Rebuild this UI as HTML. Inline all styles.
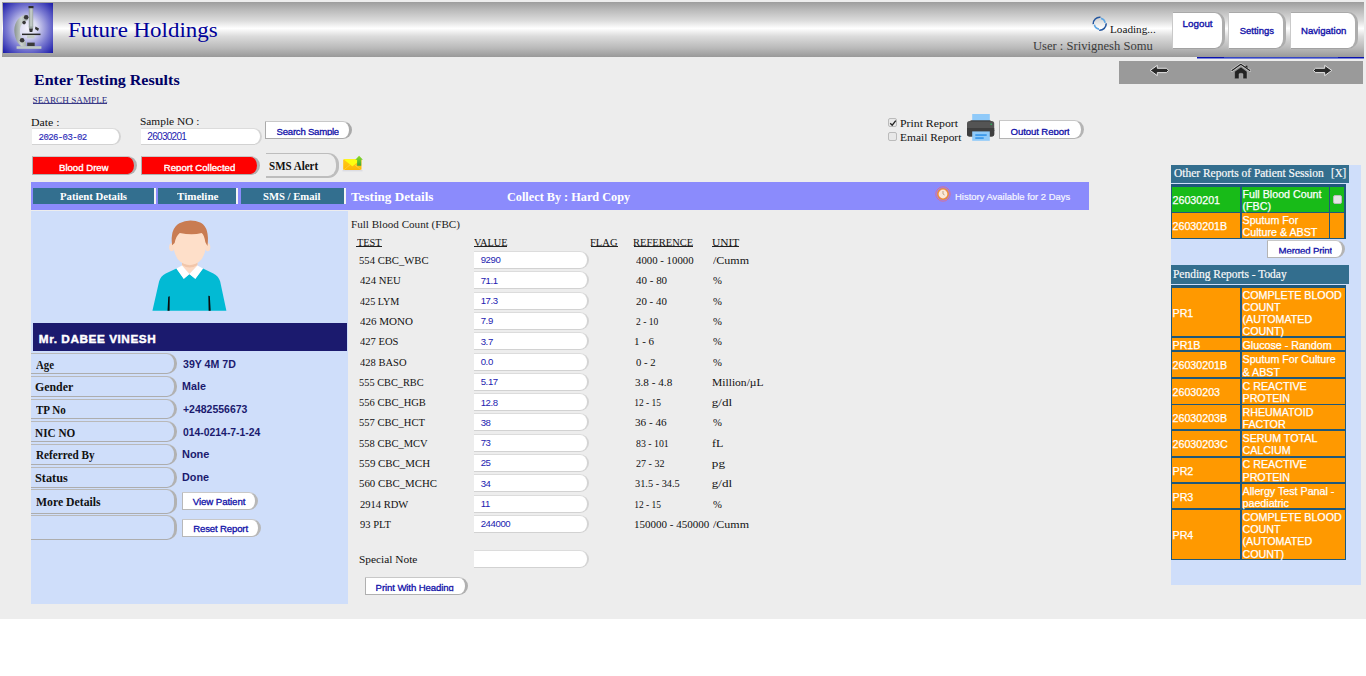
<!DOCTYPE html>
<html><head><meta charset="utf-8"><title>Enter Testing Results</title>
<style>
html,body{margin:0;padding:0;background:#fff;width:1366px;height:676px;overflow:hidden}
body>div,body>svg{position:absolute}
.t{white-space:nowrap}
</style></head><body>
<div style="left:0px;top:0px;width:1366px;height:619px;background:#ededed"></div>
<div style="left:2px;top:2px;width:1362px;height:55px;background:linear-gradient(to bottom,#9d9d9d 0%,#b9b9b9 14%,#dcdcdc 34%,#ffffff 48%,#dcdcdc 62%,#b9b9b9 84%,#999999 100%)"></div>
<svg style="position:absolute;left:3px;top:3px" width="50" height="50" viewBox="0 0 50 50">
<defs><radialGradient id="lg" cx="0.5" cy="0.5" r="0.7"><stop offset="0" stop-color="#f4f4fc"/><stop offset="0.25" stop-color="#dcdcf2"/><stop offset="0.6" stop-color="#7c7cd2"/><stop offset="1" stop-color="#1a1aa8"/></radialGradient>
<linearGradient id="mg" x1="0" y1="0" x2="1" y2="0"><stop offset="0" stop-color="#88938f"/><stop offset="0.5" stop-color="#ccd3d0"/><stop offset="1" stop-color="#98a29e"/></linearGradient></defs>
<rect width="50" height="50" fill="url(#lg)"/>
<path d="M22.5 11.5 C14 14 10.5 22 11.5 30 C12.3 37 15.5 41.5 19 43.5 L23 43.5 L23 39 C18.5 36.5 16.5 32 17 27 C17.5 22 20 18.5 25 17 Z" fill="url(#mg)"/>
<rect x="25.8" y="4" width="4.4" height="20" fill="url(#mg)"/>
<rect x="25.5" y="3" width="5" height="2.2" fill="#2e2e2e"/>
<rect x="25.8" y="23.5" width="4.4" height="2" fill="#9aa5a1"/>
<path d="M26 25.5 L30 25.5 L29.3 29 L26.7 29 Z" fill="#333"/>
<path d="M32.5 23.5 L36 25.5 L35 28 L32 26 Z" fill="#333"/>
<circle cx="23.2" cy="14.2" r="2.3" fill="#383838"/>
<circle cx="21.1" cy="19.6" r="1.8" fill="#383838"/>
<circle cx="19.1" cy="37.2" r="2.3" fill="#383838"/>
<rect x="19" y="30.6" width="18.5" height="1.5" fill="#2a2a2a"/>
<rect x="24" y="32" width="7.5" height="3.3" fill="#c4ccc8"/>
<rect x="24.2" y="39.6" width="7.5" height="3.7" fill="#3a3a3a"/>
<rect x="13.6" y="43.2" width="24.8" height="2.6" fill="#c0cac6"/>
</svg>
<div class="t" style="left:67.50px;top:17.80px;font-family:'Liberation Serif', serif;font-size:21.8px;line-height:24px;font-weight:normal;color:#000099;transform:scaleX(1.0518);transform-origin:1px 0;">Future Holdings</div>
<svg style="position:absolute;left:1091px;top:15px" width="18" height="18" viewBox="0 0 18 18">
<g fill="none" stroke-width="1.6" stroke-linecap="butt">
<path d="M2.2 9.1 A6.5 6.5 0 0 1 9.5 2.3" stroke="#24569e"/>
<path d="M15.2 8.4 A6.5 6.5 0 0 1 8.2 15.2" stroke="#24569e"/>
<path d="M9.9 3.4 A5.4 5.4 0 0 1 14.1 7.9" stroke="#5ea6e4"/>
<path d="M8 14.1 A5.4 5.4 0 0 1 3.4 9.7" stroke="#5ea6e4"/>
</g></svg>
<div class="t" style="left:1110.00px;top:22.70px;font-family:'Liberation Serif', serif;font-size:11.2px;line-height:12px;font-weight:normal;color:#111;transform:scaleX(1.0000);transform-origin:1px 0;">Loading...</div>
<div class="t" style="left:1032.80px;top:38.80px;font-family:'Liberation Serif', serif;font-size:12.3px;line-height:14px;font-weight:normal;color:#3b3b3b;transform:scaleX(1.0224);transform-origin:1px 0;">User : Srivignesh Somu</div>
<div style="left:1172px;top:12px;width:53px;height:36.5px;background:#fff;border-left:1px solid #c9c9c9;border-top:1px solid #a9a9a9;border-bottom:1px solid #a2a2a2;border-right:3px solid #adadad;border-radius:0 10px 10px 0;box-sizing:border-box"></div>
<div class="t" style="left:1182.60px;top:17.70px;font-family:'Liberation Sans', sans-serif;font-size:9.8px;line-height:11px;font-weight:normal;color:#1010a8;letter-spacing:0px;-webkit-text-stroke:0.35px #1010a8">Logout</div>
<div style="left:1228px;top:12px;width:58px;height:36.5px;background:#fff;border-left:1px solid #c9c9c9;border-top:1px solid #a9a9a9;border-bottom:1px solid #a2a2a2;border-right:3px solid #adadad;border-radius:0 10px 10px 0;box-sizing:border-box"></div>
<div class="t" style="left:1239.70px;top:24.70px;font-family:'Liberation Sans', sans-serif;font-size:9.5px;line-height:11px;font-weight:normal;color:#1010a8;letter-spacing:0px;-webkit-text-stroke:0.35px #1010a8">Settings</div>
<div style="left:1290px;top:12px;width:68px;height:36.5px;background:#fff;border-left:1px solid #c9c9c9;border-top:1px solid #a9a9a9;border-bottom:1px solid #a2a2a2;border-right:3px solid #adadad;border-radius:0 10px 10px 0;box-sizing:border-box"></div>
<div class="t" style="left:1301.00px;top:24.70px;font-family:'Liberation Sans', sans-serif;font-size:9.6px;line-height:11px;font-weight:normal;color:#1010a8;letter-spacing:0px;-webkit-text-stroke:0.35px #1010a8">Navigation</div>
<div style="left:1197px;top:57px;width:167px;height:2px;background:linear-gradient(to bottom,#3546c4 0,#3546c4 1px,#7d86d8 1px,#7d86d8 2px)"></div>
<div style="left:1197px;top:57px;width:27px;height:1.4px;background:#0a12ae"></div>
<div style="left:1338px;top:57px;width:26px;height:1.4px;background:#0a12ae"></div>
<div style="left:1119px;top:61px;width:244px;height:23px;background:#9a9a9a"></div>
<svg style="position:absolute;left:1149px;top:64px" width="21" height="13" viewBox="0 0 21 13">
<path d="M1.2 6.4 L8.3 1.4 L8.3 4.3 L17.5 4.3 L19.6 6.4 L17.5 8.6 L8.3 8.6 L8.3 11.6 Z" fill="#2a2a2a" stroke="#f2f2f2" stroke-width="0.9" stroke-linejoin="round"/></svg>
<svg style="position:absolute;left:1231px;top:63px" width="20" height="17" viewBox="0 0 20 17">
<path d="M1 7.5 L9.8 1.3 L18.8 7.5" fill="none" stroke="#dedede" stroke-width="2.4" stroke-linecap="round" stroke-linejoin="round"/>
<path d="M1 7.5 L9.8 1.3 L18.8 7.5" fill="none" stroke="#222" stroke-width="1.3" stroke-linecap="round" stroke-linejoin="round"/>
<path d="M14 3.3 L16.2 2.6 L16.6 5.2 Z" fill="#222"/>
<path d="M3.6 8.6 L10 4.1 L16 8.6 L16 15.2 Q16 15.7 15.5 15.7 L12 15.7 L12 10.8 Q10 9.6 8 10.8 L8 15.7 L4.1 15.7 Q3.6 15.7 3.6 15.2 Z" fill="#222" stroke="#bdbdbd" stroke-width="0.4"/></svg>
<svg style="position:absolute;left:1312px;top:64px" width="21" height="13" viewBox="0 0 21 13">
<path d="M19.8 6.4 L12.7 1.4 L12.7 4.3 L3.5 4.3 L1.4 6.4 L3.5 8.6 L12.7 8.6 L12.7 11.6 Z" fill="#2a2a2a" stroke="#f2f2f2" stroke-width="0.9" stroke-linejoin="round"/></svg>
<div class="t" style="left:33.50px;top:70.90px;font-family:'Liberation Serif', serif;font-size:15.2px;line-height:17px;font-weight:bold;color:#000066;transform:scaleX(1.0543);transform-origin:0px 0;">Enter Testing Results</div>
<div class="t" style="left:32.60px;top:94.60px;font-family:'Liberation Serif', serif;font-size:9.2px;line-height:10px;font-weight:normal;color:#2b2b80;transform:scaleX(1.0000);transform-origin:1px 0;">SEARCH SAMPLE</div>
<div style="left:33.3px;top:103.2px;width:73.4px;height:1px;background:#3a3a88"></div>
<div class="t" style="left:31.20px;top:115.80px;font-family:'Liberation Serif', serif;font-size:11.2px;line-height:12px;font-weight:normal;color:#111;transform:scaleX(1.0560);transform-origin:1px 0;">Date :</div>
<div class="t" style="left:140.00px;top:114.80px;font-family:'Liberation Serif', serif;font-size:11.2px;line-height:12px;font-weight:normal;color:#111;transform:scaleX(1.0175);transform-origin:1px 0;">Sample NO :</div>
<div style="left:32px;top:128px;width:89px;height:16.5px;background:#fff;border-top:1px solid #dcdcdc;border-bottom:1px solid #d2d2d2;border-right:2px solid #d4d4d4;border-radius:0 9px 9px 0;box-sizing:border-box"></div>
<div class="t" style="left:38.60px;top:133.20px;font-family:'Liberation Mono', monospace;font-size:9px;line-height:10px;font-weight:normal;color:#2a2ab8;letter-spacing:-0.6px;-webkit-text-stroke:0.15px #2a2ab8">2026-03-02</div>
<div style="left:141px;top:128px;width:121px;height:16.5px;background:#fff;border-top:1px solid #dcdcdc;border-bottom:1px solid #d2d2d2;border-right:2px solid #d4d4d4;border-radius:0 9px 9px 0;box-sizing:border-box"></div>
<div class="t" style="left:147.30px;top:131.00px;font-family:'Liberation Sans', sans-serif;font-size:10px;line-height:11px;font-weight:normal;color:#1c1cb0;letter-spacing:-0.7px">26030201</div>
<div style="left:265px;top:121px;width:87px;height:18px;background:#fff;border-left:1px solid #aaa;border-top:1px solid #c8c8c8;border-bottom:1px solid #aaa;border-right:3px solid #aaa;border-radius:0 11px 11px 0;box-sizing:border-box"></div>
<div class="t" style="left:276.60px;top:125.70px;font-family:'Liberation Sans', sans-serif;font-size:9.6px;line-height:11px;font-weight:normal;color:#1010a8;letter-spacing:-0.25px;-webkit-text-stroke:0.3px #1010a8;clip-path:inset(0 0 1.30px 0)">Search Sample</div>
<div style="left:32px;top:156px;width:105px;height:19px;background:#ff0000;border-left:1px solid #b0b0b0;border-top:1px solid #c8c8c8;border-bottom:1px solid #b0b0b0;border-right:3px solid #b0b0b0;border-radius:0 11px 11px 0;box-sizing:border-box"></div>
<div class="t" style="left:59.00px;top:161.80px;font-family:'Liberation Sans', sans-serif;font-size:9.6px;line-height:11px;font-weight:normal;color:#fff;letter-spacing:0px;-webkit-text-stroke:0.35px #fff;clip-path:inset(0 0 1.20px 0)">Blood Drew</div>
<div style="left:141px;top:156px;width:119px;height:19px;background:#ff0000;border-left:1px solid #b0b0b0;border-top:1px solid #c8c8c8;border-bottom:1px solid #b0b0b0;border-right:3px solid #b0b0b0;border-radius:0 11px 11px 0;box-sizing:border-box"></div>
<div class="t" style="left:163.80px;top:161.80px;font-family:'Liberation Sans', sans-serif;font-size:9.6px;line-height:11px;font-weight:normal;color:#fff;letter-spacing:0px;-webkit-text-stroke:0.35px #fff;clip-path:inset(0 0 1.20px 0)">Report Collected</div>
<div style="left:266px;top:153px;width:73px;height:25px;border-top:1px solid #bdbdbd;border-bottom:2px solid #bdbdbd;border-right:3px solid #bdbdbd;border-radius:0 11px 11px 0;box-sizing:border-box"></div>
<div class="t" style="left:268.70px;top:160.00px;font-family:'Liberation Serif', serif;font-size:11.6px;line-height:13px;font-weight:bold;color:#111;transform:scaleX(0.9471);transform-origin:1px 0;">SMS Alert</div>
<svg style="position:absolute;left:342px;top:155px" width="21" height="17" viewBox="0 0 21 17">
<defs><linearGradient id="eg" x1="0" y1="0" x2="0" y2="1"><stop offset="0" stop-color="#ffcc1a"/><stop offset="1" stop-color="#ffb805"/></linearGradient>
<linearGradient id="ag" x1="0" y1="0" x2="0" y2="1"><stop offset="0" stop-color="#8ede22"/><stop offset="1" stop-color="#43a53a"/></linearGradient></defs>
<rect x="1.2" y="4.3" width="18.3" height="10.8" rx="1" fill="url(#eg)"/>
<path d="M1.5 4.3 L10 11 Q10.4 11.4 10.8 11 L19.3 4.3 Z" fill="#ffff10"/>
<path d="M2.2 14.6 L8.2 9.6 M18.6 14.6 L12.6 9.6" stroke="#ffe88a" stroke-width="0.6" stroke-dasharray="1 0.6"/>
<path d="M17.1 0.8 L20.9 4.8 L19.2 4.8 L19.2 10.8 L15.1 10.8 L15.1 4.8 L13.3 4.8 Z" fill="url(#ag)"/>
<rect x="0.5" y="15.3" width="20" height="1" fill="#c9cad8" opacity="0.7"/>
</svg>
<div style="left:31px;top:182px;width:1058px;height:28px;background:#8b8bfc"></div>
<div style="left:33px;top:188px;width:121px;height:16px;background:#336f8f"></div>
<div style="left:154px;top:188px;width:2px;height:16px;background:#f4f4f4"></div>
<div class="t" style="left:60.10px;top:191.00px;font-family:'Liberation Serif', serif;font-size:10.2px;line-height:11px;font-weight:bold;color:#fff;transform:scaleX(1.0531);transform-origin:0px 0;">Patient Details</div>
<div style="left:158px;top:188px;width:78px;height:16px;background:#336f8f"></div>
<div style="left:236px;top:188px;width:2px;height:16px;background:#f4f4f4"></div>
<div class="t" style="left:176.90px;top:191.00px;font-family:'Liberation Serif', serif;font-size:10.2px;line-height:11px;font-weight:bold;color:#fff;transform:scaleX(1.0816);transform-origin:0px 0;">Timeline</div>
<div style="left:241px;top:188px;width:103px;height:16px;background:#336f8f"></div>
<div style="left:344px;top:188px;width:2px;height:16px;background:#f4f4f4"></div>
<div class="t" style="left:263.00px;top:191.00px;font-family:'Liberation Serif', serif;font-size:10.2px;line-height:11px;font-weight:bold;color:#fff;transform:scaleX(1.0481);transform-origin:1px 0;">SMS / Email</div>
<div class="t" style="left:351.30px;top:190.20px;font-family:'Liberation Serif', serif;font-size:12.4px;line-height:14px;font-weight:bold;color:#fff;transform:scaleX(1.0610);transform-origin:0px 0;">Testing Details</div>
<div class="t" style="left:506.50px;top:190.20px;font-family:'Liberation Serif', serif;font-size:12.4px;line-height:14px;font-weight:bold;color:#fff;transform:scaleX(0.9879);transform-origin:1px 0;">Collect By : Hard Copy</div>
<svg style="position:absolute;left:935px;top:186px" width="16" height="16" viewBox="0 0 16 16">
<circle cx="8" cy="8" r="7.2" fill="none" stroke="#e06c8c" stroke-width="0.9"/>
<circle cx="8" cy="8" r="6" fill="#ee8a3a"/>
<circle cx="8" cy="8" r="4.4" fill="#fbe8d8"/>
<path d="M8 5 L8 8 L9.6 9" stroke="#a86" stroke-width="0.7" fill="none"/>
</svg>
<div class="t" style="left:954.80px;top:191.10px;font-family:'Liberation Sans', sans-serif;font-size:9.8px;line-height:11px;font-weight:normal;color:#f6f6ff;transform:scaleX(0.9627);transform-origin:1px 0;-webkit-text-stroke:0.2px #f6f6ff">History Available for 2 Days</div>
<div style="left:31px;top:211px;width:317px;height:393px;background:#cfdefa"></div>
<svg style="position:absolute;left:145px;top:215px" width="90" height="100" viewBox="0 0 608 676">
<path d="M50 648 L95 450 Q105 412 140 395 L212 362 L262 430 L300 400 L340 430 L392 362 L462 395 Q497 412 508 450 L550 648 Z" fill="#02bad4"/>
<path d="M157 552 L167 550 L166 648 L152 648 Z M428 546 L438 548 L444 648 L430 648 Z" fill="#0a0a0a"/>
<path d="M250 285 L354 285 L354 345 L300 398 L250 345 Z" fill="#fcd9c3"/>
<path d="M250 318 Q302 360 354 318 L354 338 Q302 372 250 338 Z" fill="#f1c6aa"/>
<path d="M212 362 L250 342 L300 398 L262 432 Z M354 342 L392 362 L340 432 L300 398 Z" fill="#fff"/>
<ellipse cx="180" cy="218" rx="17" ry="27" fill="#fdddc7"/>
<ellipse cx="424" cy="218" rx="17" ry="27" fill="#fdddc7"/>
<path d="M188 150 Q186 336 302 338 Q418 336 416 150 Q412 110 302 108 Q192 110 188 150 Z" fill="#fedfc9"/>
<path d="M183 205 Q168 92 232 55 Q302 22 378 52 Q438 88 422 210 L408 185 Q400 135 383 122 Q320 138 235 122 Q210 140 200 190 Z" fill="#c97c52"/>
</svg>
<div style="left:33px;top:323px;width:314px;height:28px;background:#1b1a6e"></div>
<div class="t" style="left:38.90px;top:333.70px;font-family:'Liberation Sans', sans-serif;font-size:10.4px;line-height:11px;font-weight:bold;color:#fff;transform:scaleX(1.1304);transform-origin:1px 0;letter-spacing:0.5px;-webkit-text-stroke:0.4px #fff">Mr. DABEE VINESH</div>
<div style="left:31px;top:353px;width:146px;height:21.399999999999977px;border-top:1px solid #b9b9b9;border-bottom:1px solid #adadad;border-right:3px solid #b2b2b2;border-radius:0 10px 10px 0;box-sizing:border-box"></div>
<div class="t" style="left:36.20px;top:357.60px;font-family:'Liberation Serif', serif;font-size:11.8px;line-height:14px;font-weight:bold;color:#111;transform:scaleX(0.9150);transform-origin:0px 0;">Age</div>
<div class="t" style="left:183.00px;top:357.80px;font-family:'Liberation Sans', sans-serif;font-size:10.8px;line-height:12px;font-weight:bold;color:#1b1a6e;transform:scaleX(0.9815);transform-origin:0px 0;">39Y 4M 7D</div>
<div style="left:31px;top:376px;width:146px;height:20.69999999999999px;border-top:1px solid #b9b9b9;border-bottom:1px solid #adadad;border-right:3px solid #b2b2b2;border-radius:0 10px 10px 0;box-sizing:border-box"></div>
<div class="t" style="left:35.20px;top:380.25px;font-family:'Liberation Serif', serif;font-size:11.8px;line-height:14px;font-weight:bold;color:#111;transform:scaleX(1.0054);transform-origin:1px 0;">Gender</div>
<div class="t" style="left:182.00px;top:380.45px;font-family:'Liberation Sans', sans-serif;font-size:10.8px;line-height:12px;font-weight:bold;color:#1b1a6e;transform:scaleX(0.9957);transform-origin:1px 0;">Male</div>
<div style="left:31px;top:398.5px;width:146px;height:20.69999999999999px;border-top:1px solid #b9b9b9;border-bottom:1px solid #adadad;border-right:3px solid #b2b2b2;border-radius:0 10px 10px 0;box-sizing:border-box"></div>
<div class="t" style="left:36.20px;top:402.75px;font-family:'Liberation Serif', serif;font-size:11.8px;line-height:14px;font-weight:bold;color:#111;transform:scaleX(0.9344);transform-origin:0px 0;">TP No</div>
<div class="t" style="left:183.00px;top:402.95px;font-family:'Liberation Sans', sans-serif;font-size:10.8px;line-height:12px;font-weight:bold;color:#1b1a6e;transform:scaleX(0.9712);transform-origin:0px 0;">+2482556673</div>
<div style="left:31px;top:421.2px;width:146px;height:21.100000000000023px;border-top:1px solid #b9b9b9;border-bottom:1px solid #adadad;border-right:3px solid #b2b2b2;border-radius:0 10px 10px 0;box-sizing:border-box"></div>
<div class="t" style="left:35.20px;top:425.65px;font-family:'Liberation Serif', serif;font-size:11.8px;line-height:14px;font-weight:bold;color:#111;transform:scaleX(0.9512);transform-origin:1px 0;">NIC NO</div>
<div class="t" style="left:183.00px;top:425.85px;font-family:'Liberation Sans', sans-serif;font-size:10.8px;line-height:12px;font-weight:bold;color:#1b1a6e;transform:scaleX(0.9617);transform-origin:0px 0;">014-0214-7-1-24</div>
<div style="left:31px;top:443.8px;width:146px;height:20.80000000000001px;border-top:1px solid #b9b9b9;border-bottom:1px solid #adadad;border-right:3px solid #b2b2b2;border-radius:0 10px 10px 0;box-sizing:border-box"></div>
<div class="t" style="left:36.20px;top:448.10px;font-family:'Liberation Serif', serif;font-size:11.8px;line-height:14px;font-weight:bold;color:#111;transform:scaleX(0.9484);transform-origin:0px 0;">Referred By</div>
<div class="t" style="left:182.00px;top:448.30px;font-family:'Liberation Sans', sans-serif;font-size:10.8px;line-height:12px;font-weight:bold;color:#1b1a6e;transform:scaleX(1.0154);transform-origin:1px 0;">None</div>
<div style="left:31px;top:466.5px;width:146px;height:21.19999999999999px;border-top:1px solid #b9b9b9;border-bottom:1px solid #adadad;border-right:3px solid #b2b2b2;border-radius:0 10px 10px 0;box-sizing:border-box"></div>
<div class="t" style="left:35.20px;top:471.00px;font-family:'Liberation Serif', serif;font-size:11.8px;line-height:14px;font-weight:bold;color:#111;transform:scaleX(1.0433);transform-origin:1px 0;">Status</div>
<div class="t" style="left:182.00px;top:471.20px;font-family:'Liberation Sans', sans-serif;font-size:10.8px;line-height:12px;font-weight:bold;color:#1b1a6e;transform:scaleX(1.0000);transform-origin:1px 0;">Done</div>
<div style="left:31px;top:489px;width:146px;height:24.5px;border-top:1px solid #b9b9b9;border-bottom:1px solid #adadad;border-right:3px solid #b2b2b2;border-radius:0 10px 10px 0;box-sizing:border-box"></div>
<div class="t" style="left:36.20px;top:495.15px;font-family:'Liberation Serif', serif;font-size:11.8px;line-height:14px;font-weight:bold;color:#111;transform:scaleX(0.9938);transform-origin:0px 0;">More Details</div>
<div style="left:31px;top:515px;width:146px;height:25.399999999999977px;border-top:1px solid #b9b9b9;border-bottom:1px solid #adadad;border-right:3px solid #b2b2b2;border-radius:0 10px 10px 0;box-sizing:border-box"></div>
<div style="left:182px;top:492px;width:76px;height:18px;background:#fff;border-left:1px solid #b8b8b8;border-top:1px solid #c8c8c8;border-bottom:1px solid #b8b8b8;border-right:3px solid #b8b8b8;border-radius:0 11px 11px 0;box-sizing:border-box"></div>
<div class="t" style="left:192.80px;top:496.00px;font-family:'Liberation Sans', sans-serif;font-size:9.7px;line-height:11px;font-weight:normal;color:#1010a8;letter-spacing:-0.1px;-webkit-text-stroke:0.3px #1010a8;">View Patient</div>
<div style="left:182px;top:519px;width:79px;height:18px;background:#fff;border-left:1px solid #b8b8b8;border-top:1px solid #c8c8c8;border-bottom:1px solid #b8b8b8;border-right:3px solid #b8b8b8;border-radius:0 11px 11px 0;box-sizing:border-box"></div>
<div class="t" style="left:193.20px;top:522.90px;font-family:'Liberation Sans', sans-serif;font-size:9.6px;line-height:11px;font-weight:normal;color:#1010a8;letter-spacing:-0.15px;-webkit-text-stroke:0.3px #1010a8;">Reset Report</div>
<div class="t" style="left:350.80px;top:217.50px;font-family:'Liberation Serif', serif;font-size:11.3px;line-height:12px;font-weight:normal;color:#1a1a1a;transform:scaleX(0.9835);transform-origin:1px 0;">Full Blood Count (FBC)</div>
<div class="t" style="left:356.60px;top:236.90px;font-family:'Liberation Serif', serif;font-size:10.4px;line-height:11px;font-weight:normal;color:#111;transform:scaleX(0.9920);transform-origin:0px 0;">TEST</div>
<div style="left:356.3px;top:246.3px;width:25.400000000000002px;height:1px;background:#222"></div>
<div class="t" style="left:473.80px;top:236.90px;font-family:'Liberation Serif', serif;font-size:10.4px;line-height:11px;font-weight:normal;color:#111;transform:scaleX(0.9909);transform-origin:0px 0;">VALUE</div>
<div style="left:473.5px;top:246.3px;width:33.300000000000004px;height:1px;background:#222"></div>
<div class="t" style="left:590.40px;top:236.90px;font-family:'Liberation Serif', serif;font-size:10.4px;line-height:11px;font-weight:normal;color:#111;transform:scaleX(1.0154);transform-origin:1px 0;">FLAG</div>
<div style="left:591.1px;top:246.3px;width:27.0px;height:1px;background:#222"></div>
<div class="t" style="left:632.90px;top:236.90px;font-family:'Liberation Serif', serif;font-size:10.4px;line-height:11px;font-weight:normal;color:#111;transform:scaleX(1.0138);transform-origin:1px 0;">REFERENCE</div>
<div style="left:633.6px;top:246.3px;width:59.4px;height:1px;background:#222"></div>
<div class="t" style="left:711.50px;top:236.90px;font-family:'Liberation Serif', serif;font-size:10.4px;line-height:11px;font-weight:normal;color:#111;transform:scaleX(1.1000);transform-origin:1px 0;">UNIT</div>
<div style="left:712.2px;top:246.3px;width:27.0px;height:1px;background:#222"></div>
<div style="left:474px;top:251.0px;width:115px;height:18px;background:#fff;border-top:1px solid #dcdcdc;border-bottom:1px solid #d2d2d2;border-right:2px solid #d4d4d4;border-radius:0 9px 9px 0;box-sizing:border-box"></div>
<div class="t" style="left:358.80px;top:254.00px;font-family:'Liberation Serif', serif;font-size:11.2px;line-height:12px;font-weight:normal;color:#111;transform:scaleX(0.9507);transform-origin:1px 0;">554 CBC_WBC</div>
<div class="t" style="left:480.70px;top:254.40px;font-family:'Liberation Sans', sans-serif;font-size:9.6px;line-height:11px;font-weight:normal;color:#1c1cb0;letter-spacing:-0.4px">9290</div>
<div class="t" style="left:635.50px;top:255.00px;font-family:'Liberation Serif', serif;font-size:10.6px;line-height:11px;font-weight:normal;color:#111;transform:scaleX(1.0196);transform-origin:0px 0;">4000 - 10000</div>
<div class="t" style="left:712.60px;top:254.00px;font-family:'Liberation Serif', serif;font-size:11.2px;line-height:12px;font-weight:normal;color:#111;transform:scaleX(1.0727);transform-origin:0px 0;">/Cumm</div>
<div style="left:474px;top:271.3px;width:115px;height:18px;background:#fff;border-top:1px solid #dcdcdc;border-bottom:1px solid #d2d2d2;border-right:2px solid #d4d4d4;border-radius:0 9px 9px 0;box-sizing:border-box"></div>
<div class="t" style="left:359.80px;top:274.30px;font-family:'Liberation Serif', serif;font-size:11.2px;line-height:12px;font-weight:normal;color:#111;transform:scaleX(0.9595);transform-origin:0px 0;">424 NEU</div>
<div class="t" style="left:480.70px;top:274.70px;font-family:'Liberation Sans', sans-serif;font-size:9.6px;line-height:11px;font-weight:normal;color:#1c1cb0;letter-spacing:-0.4px">71.1</div>
<div class="t" style="left:635.50px;top:275.30px;font-family:'Liberation Serif', serif;font-size:10.6px;line-height:11px;font-weight:normal;color:#111;transform:scaleX(1.0367);transform-origin:0px 0;">40 - 80</div>
<div class="t" style="left:712.60px;top:274.30px;font-family:'Liberation Serif', serif;font-size:11.2px;line-height:12px;font-weight:normal;color:#111;transform:scaleX(0.9556);transform-origin:0px 0;">%</div>
<div style="left:474px;top:291.6px;width:115px;height:18px;background:#fff;border-top:1px solid #dcdcdc;border-bottom:1px solid #d2d2d2;border-right:2px solid #d4d4d4;border-radius:0 9px 9px 0;box-sizing:border-box"></div>
<div class="t" style="left:359.80px;top:294.60px;font-family:'Liberation Serif', serif;font-size:11.2px;line-height:12px;font-weight:normal;color:#111;transform:scaleX(0.9070);transform-origin:0px 0;">425 LYM</div>
<div class="t" style="left:480.70px;top:295.00px;font-family:'Liberation Sans', sans-serif;font-size:9.6px;line-height:11px;font-weight:normal;color:#1c1cb0;letter-spacing:-0.4px">17.3</div>
<div class="t" style="left:635.50px;top:295.60px;font-family:'Liberation Serif', serif;font-size:10.6px;line-height:11px;font-weight:normal;color:#111;transform:scaleX(1.0267);transform-origin:0px 0;">20 - 40</div>
<div class="t" style="left:712.60px;top:294.60px;font-family:'Liberation Serif', serif;font-size:11.2px;line-height:12px;font-weight:normal;color:#111;transform:scaleX(0.9556);transform-origin:0px 0;">%</div>
<div style="left:474px;top:311.9px;width:115px;height:18px;background:#fff;border-top:1px solid #dcdcdc;border-bottom:1px solid #d2d2d2;border-right:2px solid #d4d4d4;border-radius:0 9px 9px 0;box-sizing:border-box"></div>
<div class="t" style="left:359.80px;top:314.90px;font-family:'Liberation Serif', serif;font-size:11.2px;line-height:12px;font-weight:normal;color:#111;transform:scaleX(0.9852);transform-origin:0px 0;">426 MONO</div>
<div class="t" style="left:480.70px;top:315.30px;font-family:'Liberation Sans', sans-serif;font-size:9.6px;line-height:11px;font-weight:normal;color:#1c1cb0;letter-spacing:-0.4px">7.9</div>
<div class="t" style="left:635.50px;top:315.90px;font-family:'Liberation Serif', serif;font-size:10.6px;line-height:11px;font-weight:normal;color:#111;transform:scaleX(0.9000);transform-origin:0px 0;">2 - 10</div>
<div class="t" style="left:712.60px;top:314.90px;font-family:'Liberation Serif', serif;font-size:11.2px;line-height:12px;font-weight:normal;color:#111;transform:scaleX(0.9556);transform-origin:0px 0;">%</div>
<div style="left:474px;top:332.2px;width:115px;height:18px;background:#fff;border-top:1px solid #dcdcdc;border-bottom:1px solid #d2d2d2;border-right:2px solid #d4d4d4;border-radius:0 9px 9px 0;box-sizing:border-box"></div>
<div class="t" style="left:359.80px;top:335.20px;font-family:'Liberation Serif', serif;font-size:11.2px;line-height:12px;font-weight:normal;color:#111;transform:scaleX(0.9450);transform-origin:0px 0;">427 EOS</div>
<div class="t" style="left:480.70px;top:335.60px;font-family:'Liberation Sans', sans-serif;font-size:9.6px;line-height:11px;font-weight:normal;color:#1c1cb0;letter-spacing:-0.4px">3.7</div>
<div class="t" style="left:633.50px;top:336.20px;font-family:'Liberation Serif', serif;font-size:10.6px;line-height:11px;font-weight:normal;color:#111;transform:scaleX(1.0412);transform-origin:2px 0;">1 - 6</div>
<div class="t" style="left:712.60px;top:335.20px;font-family:'Liberation Serif', serif;font-size:11.2px;line-height:12px;font-weight:normal;color:#111;transform:scaleX(0.9556);transform-origin:0px 0;">%</div>
<div style="left:474px;top:352.5px;width:115px;height:18px;background:#fff;border-top:1px solid #dcdcdc;border-bottom:1px solid #d2d2d2;border-right:2px solid #d4d4d4;border-radius:0 9px 9px 0;box-sizing:border-box"></div>
<div class="t" style="left:359.80px;top:355.50px;font-family:'Liberation Serif', serif;font-size:11.2px;line-height:12px;font-weight:normal;color:#111;transform:scaleX(0.9408);transform-origin:0px 0;">428 BASO</div>
<div class="t" style="left:480.70px;top:355.90px;font-family:'Liberation Sans', sans-serif;font-size:9.6px;line-height:11px;font-weight:normal;color:#1c1cb0;letter-spacing:-0.4px">0.0</div>
<div class="t" style="left:635.50px;top:356.50px;font-family:'Liberation Serif', serif;font-size:10.6px;line-height:11px;font-weight:normal;color:#111;transform:scaleX(1.0105);transform-origin:0px 0;">0 - 2</div>
<div class="t" style="left:712.60px;top:355.50px;font-family:'Liberation Serif', serif;font-size:11.2px;line-height:12px;font-weight:normal;color:#111;transform:scaleX(0.9556);transform-origin:0px 0;">%</div>
<div style="left:474px;top:372.8px;width:115px;height:18px;background:#fff;border-top:1px solid #dcdcdc;border-bottom:1px solid #d2d2d2;border-right:2px solid #d4d4d4;border-radius:0 9px 9px 0;box-sizing:border-box"></div>
<div class="t" style="left:358.80px;top:375.80px;font-family:'Liberation Serif', serif;font-size:11.2px;line-height:12px;font-weight:normal;color:#111;transform:scaleX(0.9221);transform-origin:1px 0;">555 CBC_RBC</div>
<div class="t" style="left:480.70px;top:376.20px;font-family:'Liberation Sans', sans-serif;font-size:9.6px;line-height:11px;font-weight:normal;color:#1c1cb0;letter-spacing:-0.4px">5.17</div>
<div class="t" style="left:634.50px;top:376.80px;font-family:'Liberation Serif', serif;font-size:10.6px;line-height:11px;font-weight:normal;color:#111;transform:scaleX(1.0559);transform-origin:1px 0;">3.8 - 4.8</div>
<div class="t" style="left:711.60px;top:375.80px;font-family:'Liberation Serif', serif;font-size:11.2px;line-height:12px;font-weight:normal;color:#111;transform:scaleX(1.0333);transform-origin:1px 0;">Million/&micro;L</div>
<div style="left:474px;top:393.1px;width:115px;height:18px;background:#fff;border-top:1px solid #dcdcdc;border-bottom:1px solid #d2d2d2;border-right:2px solid #d4d4d4;border-radius:0 9px 9px 0;box-sizing:border-box"></div>
<div class="t" style="left:358.80px;top:396.10px;font-family:'Liberation Serif', serif;font-size:11.2px;line-height:12px;font-weight:normal;color:#111;transform:scaleX(0.9371);transform-origin:1px 0;">556 CBC_HGB</div>
<div class="t" style="left:480.70px;top:396.50px;font-family:'Liberation Sans', sans-serif;font-size:9.6px;line-height:11px;font-weight:normal;color:#1c1cb0;letter-spacing:-0.4px">12.8</div>
<div class="t" style="left:633.50px;top:397.10px;font-family:'Liberation Serif', serif;font-size:10.6px;line-height:11px;font-weight:normal;color:#111;transform:scaleX(0.8929);transform-origin:2px 0;">12 - 15</div>
<div class="t" style="left:711.60px;top:396.10px;font-family:'Liberation Serif', serif;font-size:11.2px;line-height:12px;font-weight:normal;color:#111;transform:scaleX(1.1687);transform-origin:1px 0;">g/dl</div>
<div style="left:474px;top:413.4px;width:115px;height:18px;background:#fff;border-top:1px solid #dcdcdc;border-bottom:1px solid #d2d2d2;border-right:2px solid #d4d4d4;border-radius:0 9px 9px 0;box-sizing:border-box"></div>
<div class="t" style="left:358.80px;top:416.40px;font-family:'Liberation Serif', serif;font-size:11.2px;line-height:12px;font-weight:normal;color:#111;transform:scaleX(0.9406);transform-origin:1px 0;">557 CBC_HCT</div>
<div class="t" style="left:480.70px;top:416.80px;font-family:'Liberation Sans', sans-serif;font-size:9.6px;line-height:11px;font-weight:normal;color:#1c1cb0;letter-spacing:-0.4px">38</div>
<div class="t" style="left:634.50px;top:417.40px;font-family:'Liberation Serif', serif;font-size:10.6px;line-height:11px;font-weight:normal;color:#111;transform:scaleX(1.0552);transform-origin:1px 0;">36 - 46</div>
<div class="t" style="left:712.60px;top:416.40px;font-family:'Liberation Serif', serif;font-size:11.2px;line-height:12px;font-weight:normal;color:#111;transform:scaleX(0.9556);transform-origin:0px 0;">%</div>
<div style="left:474px;top:433.7px;width:115px;height:18px;background:#fff;border-top:1px solid #dcdcdc;border-bottom:1px solid #d2d2d2;border-right:2px solid #d4d4d4;border-radius:0 9px 9px 0;box-sizing:border-box"></div>
<div class="t" style="left:358.80px;top:436.70px;font-family:'Liberation Serif', serif;font-size:11.2px;line-height:12px;font-weight:normal;color:#111;transform:scaleX(0.9389);transform-origin:1px 0;">558 CBC_MCV</div>
<div class="t" style="left:480.70px;top:437.10px;font-family:'Liberation Sans', sans-serif;font-size:9.6px;line-height:11px;font-weight:normal;color:#1c1cb0;letter-spacing:-0.4px">73</div>
<div class="t" style="left:635.50px;top:437.70px;font-family:'Liberation Serif', serif;font-size:10.6px;line-height:11px;font-weight:normal;color:#111;transform:scaleX(0.9265);transform-origin:0px 0;">83 - 101</div>
<div class="t" style="left:711.60px;top:436.70px;font-family:'Liberation Serif', serif;font-size:11.2px;line-height:12px;font-weight:normal;color:#111;transform:scaleX(1.0778);transform-origin:1px 0;">fL</div>
<div style="left:474px;top:454.0px;width:115px;height:18px;background:#fff;border-top:1px solid #dcdcdc;border-bottom:1px solid #d2d2d2;border-right:2px solid #d4d4d4;border-radius:0 9px 9px 0;box-sizing:border-box"></div>
<div class="t" style="left:358.80px;top:457.00px;font-family:'Liberation Serif', serif;font-size:11.2px;line-height:12px;font-weight:normal;color:#111;transform:scaleX(0.9732);transform-origin:1px 0;">559 CBC_MCH</div>
<div class="t" style="left:480.70px;top:457.40px;font-family:'Liberation Sans', sans-serif;font-size:9.6px;line-height:11px;font-weight:normal;color:#1c1cb0;letter-spacing:-0.4px">25</div>
<div class="t" style="left:635.50px;top:458.00px;font-family:'Liberation Serif', serif;font-size:10.6px;line-height:11px;font-weight:normal;color:#111;transform:scaleX(0.9500);transform-origin:0px 0;">27 - 32</div>
<div class="t" style="left:711.60px;top:457.00px;font-family:'Liberation Serif', serif;font-size:11.2px;line-height:12px;font-weight:normal;color:#111;transform:scaleX(1.1800);transform-origin:1px 0;">pg</div>
<div style="left:474px;top:474.3px;width:115px;height:18px;background:#fff;border-top:1px solid #dcdcdc;border-bottom:1px solid #d2d2d2;border-right:2px solid #d4d4d4;border-radius:0 9px 9px 0;box-sizing:border-box"></div>
<div class="t" style="left:358.80px;top:477.30px;font-family:'Liberation Serif', serif;font-size:11.2px;line-height:12px;font-weight:normal;color:#111;transform:scaleX(0.9684);transform-origin:1px 0;">560 CBC_MCHC</div>
<div class="t" style="left:480.70px;top:477.70px;font-family:'Liberation Sans', sans-serif;font-size:9.6px;line-height:11px;font-weight:normal;color:#1c1cb0;letter-spacing:-0.4px">34</div>
<div class="t" style="left:634.50px;top:478.30px;font-family:'Liberation Serif', serif;font-size:10.6px;line-height:11px;font-weight:normal;color:#111;transform:scaleX(0.9727);transform-origin:1px 0;">31.5 - 34.5</div>
<div class="t" style="left:711.60px;top:477.30px;font-family:'Liberation Serif', serif;font-size:11.2px;line-height:12px;font-weight:normal;color:#111;transform:scaleX(1.1687);transform-origin:1px 0;">g/dl</div>
<div style="left:474px;top:494.6px;width:115px;height:18px;background:#fff;border-top:1px solid #dcdcdc;border-bottom:1px solid #d2d2d2;border-right:2px solid #d4d4d4;border-radius:0 9px 9px 0;box-sizing:border-box"></div>
<div class="t" style="left:359.80px;top:497.60px;font-family:'Liberation Serif', serif;font-size:11.2px;line-height:12px;font-weight:normal;color:#111;transform:scaleX(0.9412);transform-origin:0px 0;">2914 RDW</div>
<div class="t" style="left:480.70px;top:498.00px;font-family:'Liberation Sans', sans-serif;font-size:9.6px;line-height:11px;font-weight:normal;color:#1c1cb0;letter-spacing:-0.4px">11</div>
<div class="t" style="left:633.50px;top:498.60px;font-family:'Liberation Serif', serif;font-size:10.6px;line-height:11px;font-weight:normal;color:#111;transform:scaleX(0.8929);transform-origin:2px 0;">12 - 15</div>
<div class="t" style="left:712.60px;top:497.60px;font-family:'Liberation Serif', serif;font-size:11.2px;line-height:12px;font-weight:normal;color:#111;transform:scaleX(0.9556);transform-origin:0px 0;">%</div>
<div style="left:474px;top:514.9px;width:115px;height:18px;background:#fff;border-top:1px solid #dcdcdc;border-bottom:1px solid #d2d2d2;border-right:2px solid #d4d4d4;border-radius:0 9px 9px 0;box-sizing:border-box"></div>
<div class="t" style="left:359.80px;top:517.90px;font-family:'Liberation Serif', serif;font-size:11.2px;line-height:12px;font-weight:normal;color:#111;transform:scaleX(0.9394);transform-origin:0px 0;">93 PLT</div>
<div class="t" style="left:480.70px;top:518.30px;font-family:'Liberation Sans', sans-serif;font-size:9.6px;line-height:11px;font-weight:normal;color:#1c1cb0;letter-spacing:-0.4px">244000</div>
<div class="t" style="left:633.50px;top:518.90px;font-family:'Liberation Serif', serif;font-size:10.6px;line-height:11px;font-weight:normal;color:#111;transform:scaleX(1.0414);transform-origin:2px 0;">150000 - 450000</div>
<div class="t" style="left:712.60px;top:517.90px;font-family:'Liberation Serif', serif;font-size:11.2px;line-height:12px;font-weight:normal;color:#111;transform:scaleX(1.0727);transform-origin:0px 0;">/Cumm</div>
<div class="t" style="left:358.60px;top:552.80px;font-family:'Liberation Serif', serif;font-size:11.3px;line-height:12px;font-weight:normal;color:#111;transform:scaleX(1.0053);transform-origin:1px 0;">Special Note</div>
<div style="left:474px;top:550px;width:115px;height:18px;background:#fff;border-top:1px solid #dcdcdc;border-bottom:1px solid #d2d2d2;border-right:2px solid #d4d4d4;border-radius:0 9px 9px 0;box-sizing:border-box"></div>
<div style="left:365px;top:577px;width:103px;height:18px;background:#fff;border-left:1px solid #b0b0b0;border-top:1px solid #c8c8c8;border-bottom:1px solid #b0b0b0;border-right:3px solid #b0b0b0;border-radius:0 11px 11px 0;box-sizing:border-box"></div>
<div class="t" style="left:375.60px;top:582.30px;font-family:'Liberation Sans', sans-serif;font-size:9.6px;line-height:11px;font-weight:normal;color:#1010a8;letter-spacing:-0.1px;-webkit-text-stroke:0.3px #1010a8;clip-path:inset(0 0 2.10px 0)">Print With Heading</div>
<div style="left:888px;top:118px;width:9px;height:9px;border:1px solid #bbb;border-radius:2px;background:#e8e8e8;box-sizing:border-box"></div>
<svg style="position:absolute;left:889px;top:119px" width="8" height="8" viewBox="0 0 8 8"><path d="M1.2 4.2 L3.2 6.2 L6.8 1.6" stroke="#222" stroke-width="1.3" fill="none"/></svg>
<div style="left:888px;top:132px;width:9px;height:9px;border:1px solid #bbb;border-radius:2px;background:#e8e8e8;box-sizing:border-box"></div>
<div class="t" style="left:900.00px;top:116.70px;font-family:'Liberation Serif', serif;font-size:11.4px;line-height:12px;font-weight:normal;color:#111;transform:scaleX(1.0364);transform-origin:1px 0;">Print Report</div>
<div class="t" style="left:900.00px;top:130.70px;font-family:'Liberation Serif', serif;font-size:11.4px;line-height:12px;font-weight:normal;color:#111;transform:scaleX(1.0050);transform-origin:1px 0;">Email Report</div>
<svg style="position:absolute;left:966px;top:114px" width="29" height="27" viewBox="0 0 29 27">
<rect x="6.2" y="0" width="17.6" height="8" fill="#90caf9"/>
<rect x="1" y="7" width="27.2" height="15.4" rx="2.6" fill="#545454"/>
<rect x="1" y="14" width="27.2" height="8.4" rx="2.2" fill="#3e3e3e"/>
<rect x="1" y="14" width="27.2" height="3" fill="#3e3e3e"/>
<rect x="4.5" y="6.3" width="20" height="1.2" fill="#3a3a3a"/>
<circle cx="25.2" cy="10.3" r="0.8" fill="#21c45a"/>
<rect x="6.2" y="17.4" width="17.6" height="9.4" fill="#90caf9"/>
<rect x="9.3" y="20.4" width="11.4" height="1.3" fill="#1e88e5"/>
<rect x="9.3" y="23.4" width="8.4" height="1.3" fill="#1e88e5"/>
</svg>
<div style="left:999px;top:120px;width:85px;height:19px;background:#fff;border-left:1px solid #b4b4b4;border-top:1px solid #c8c8c8;border-bottom:1px solid #b4b4b4;border-right:3px solid #b4b4b4;border-radius:0 11px 11px 0;box-sizing:border-box"></div>
<div class="t" style="left:1010.60px;top:125.80px;font-family:'Liberation Sans', sans-serif;font-size:9.6px;line-height:11px;font-weight:normal;color:#1010a8;letter-spacing:-0.1px;-webkit-text-stroke:0.3px #1010a8;clip-path:inset(0 0 1.90px 0)">Outout Report</div>
<div style="left:1171px;top:165px;width:190px;height:420px;background:#cfdefa"></div>
<div style="left:1171px;top:165px;width:178px;height:18px;background:#336e8e"></div>
<div class="t" style="left:1174.30px;top:167.30px;font-family:'Liberation Serif', serif;font-size:11.6px;line-height:13px;font-weight:normal;color:#fafafa;transform:scaleX(0.9887);transform-origin:0px 0;-webkit-text-stroke:0.2px #fafafa">Other Reports of Patient Session</div>
<div class="t" style="left:1331.00px;top:167.30px;font-family:'Liberation Serif', serif;font-size:11.6px;line-height:13px;font-weight:normal;color:#fafafa;transform:scaleX(0.9429);transform-origin:1px 0;-webkit-text-stroke:0.2px #fafafa">[X]</div>
<div style="left:1171px;top:184px;width:175px;height:55px;background:#1f587a"></div>
<div style="left:1172px;top:186.5px;width:68px;height:25.0px;background:#18bb18"></div>
<div class="t" style="left:1172.50px;top:193.80px;font-family:'Liberation Sans', sans-serif;font-size:10.7px;line-height:12.2px;color:#fff;-webkit-text-stroke:0.25px #fff">26030201</div>
<div style="left:1242px;top:186.5px;width:86.6px;height:25.0px;background:#18bb18"></div>
<div class="t" style="left:1242.50px;top:187.70px;font-family:'Liberation Sans', sans-serif;font-size:10.7px;line-height:12.2px;color:#fff;-webkit-text-stroke:0.25px #fff">Full Blood Count<br>(FBC)</div>
<div style="left:1330.4px;top:186.5px;width:14.0px;height:25.0px;background:#18bb18"></div>
<div style="left:1333px;top:195px;width:9px;height:9px;border:1px solid #bbb;border-radius:2px;background:#e6e6e6;box-sizing:border-box"></div>
<div style="left:1172px;top:213px;width:68px;height:24.6px;background:#ff9900"></div>
<div class="t" style="left:1172.50px;top:220.10px;font-family:'Liberation Sans', sans-serif;font-size:10.7px;line-height:12.2px;color:#fff;-webkit-text-stroke:0.25px #fff">26030201B</div>
<div style="left:1242px;top:213px;width:86.6px;height:24.6px;background:#ff9900"></div>
<div class="t" style="left:1242.50px;top:214.00px;font-family:'Liberation Sans', sans-serif;font-size:10.7px;line-height:12.2px;color:#fff;-webkit-text-stroke:0.25px #fff">Sputum For<br>Culture &amp; ABST</div>
<div style="left:1330.4px;top:213px;width:14.0px;height:24.6px;background:#ff9900"></div>
<div style="left:1267px;top:240px;width:78px;height:18px;background:#fff;border-left:1px solid #b4b4b4;border-top:1px solid #c8c8c8;border-bottom:1px solid #b4b4b4;border-right:3px solid #b4b4b4;border-radius:0 11px 11px 0;box-sizing:border-box"></div>
<div class="t" style="left:1278.60px;top:244.70px;font-family:'Liberation Sans', sans-serif;font-size:9.6px;line-height:11px;font-weight:normal;color:#1010a8;letter-spacing:-0.12px;-webkit-text-stroke:0.3px #1010a8;clip-path:inset(0 0 2.10px 0)">Merged Print</div>
<div style="left:1171px;top:265px;width:178px;height:19px;background:#336e8e"></div>
<div class="t" style="left:1173.30px;top:268.00px;font-family:'Liberation Serif', serif;font-size:11.6px;line-height:13px;font-weight:normal;color:#fafafa;transform:scaleX(0.9860);transform-origin:1px 0;-webkit-text-stroke:0.2px #fafafa">Pending Reports - Today</div>
<div style="left:1171px;top:285px;width:175px;height:275px;background:#1f587a"></div>
<div style="left:1172px;top:288px;width:68px;height:48px;background:#ff9900"></div>
<div class="t" style="left:1172.50px;top:306.80px;font-family:'Liberation Sans', sans-serif;font-size:10.7px;line-height:12.2px;color:#fff;-webkit-text-stroke:0.25px #fff">PR1</div>
<div style="left:1242px;top:288px;width:102.5px;height:48px;background:#ff9900"></div>
<div class="t" style="left:1242.50px;top:288.50px;font-family:'Liberation Sans', sans-serif;font-size:10.7px;line-height:12.2px;color:#fff;-webkit-text-stroke:0.25px #fff">COMPLETE BLOOD<br>COUNT<br>(AUTOMATED<br>COUNT)</div>
<div style="left:1172px;top:338px;width:68px;height:12.4px;background:#ff9900"></div>
<div class="t" style="left:1172.50px;top:339.00px;font-family:'Liberation Sans', sans-serif;font-size:10.7px;line-height:12.2px;color:#fff;-webkit-text-stroke:0.25px #fff">PR1B</div>
<div style="left:1242px;top:338px;width:102.5px;height:12.4px;background:#ff9900"></div>
<div class="t" style="left:1242.50px;top:339.00px;font-family:'Liberation Sans', sans-serif;font-size:10.7px;line-height:12.2px;color:#fff;-webkit-text-stroke:0.25px #fff">Glucose - Random</div>
<div style="left:1172px;top:352.2px;width:68px;height:24.8px;background:#ff9900"></div>
<div class="t" style="left:1172.50px;top:359.40px;font-family:'Liberation Sans', sans-serif;font-size:10.7px;line-height:12.2px;color:#fff;-webkit-text-stroke:0.25px #fff">26030201B</div>
<div style="left:1242px;top:352.2px;width:102.5px;height:24.8px;background:#ff9900"></div>
<div class="t" style="left:1242.50px;top:353.30px;font-family:'Liberation Sans', sans-serif;font-size:10.7px;line-height:12.2px;color:#fff;-webkit-text-stroke:0.25px #fff">Sputum For Culture<br>&amp; ABST</div>
<div style="left:1172px;top:379px;width:68px;height:24.5px;background:#ff9900"></div>
<div class="t" style="left:1172.50px;top:386.05px;font-family:'Liberation Sans', sans-serif;font-size:10.7px;line-height:12.2px;color:#fff;-webkit-text-stroke:0.25px #fff">26030203</div>
<div style="left:1242px;top:379px;width:102.5px;height:24.5px;background:#ff9900"></div>
<div class="t" style="left:1242.50px;top:379.95px;font-family:'Liberation Sans', sans-serif;font-size:10.7px;line-height:12.2px;color:#fff;-webkit-text-stroke:0.25px #fff">C REACTIVE<br>PROTEIN</div>
<div style="left:1172px;top:405.3px;width:68px;height:23.9px;background:#ff9900"></div>
<div class="t" style="left:1172.50px;top:412.05px;font-family:'Liberation Sans', sans-serif;font-size:10.7px;line-height:12.2px;color:#fff;-webkit-text-stroke:0.25px #fff">26030203B</div>
<div style="left:1242px;top:405.3px;width:102.5px;height:23.9px;background:#ff9900"></div>
<div class="t" style="left:1242.50px;top:405.95px;font-family:'Liberation Sans', sans-serif;font-size:10.7px;line-height:12.2px;color:#fff;-webkit-text-stroke:0.25px #fff">RHEUMATOID<br>FACTOR</div>
<div style="left:1172px;top:431px;width:68px;height:24.5px;background:#ff9900"></div>
<div class="t" style="left:1172.50px;top:438.05px;font-family:'Liberation Sans', sans-serif;font-size:10.7px;line-height:12.2px;color:#fff;-webkit-text-stroke:0.25px #fff">26030203C</div>
<div style="left:1242px;top:431px;width:102.5px;height:24.5px;background:#ff9900"></div>
<div class="t" style="left:1242.50px;top:431.95px;font-family:'Liberation Sans', sans-serif;font-size:10.7px;line-height:12.2px;color:#fff;-webkit-text-stroke:0.25px #fff">SERUM TOTAL<br>CALCIUM</div>
<div style="left:1172px;top:457.5px;width:68px;height:24.5px;background:#ff9900"></div>
<div class="t" style="left:1172.50px;top:464.55px;font-family:'Liberation Sans', sans-serif;font-size:10.7px;line-height:12.2px;color:#fff;-webkit-text-stroke:0.25px #fff">PR2</div>
<div style="left:1242px;top:457.5px;width:102.5px;height:24.5px;background:#ff9900"></div>
<div class="t" style="left:1242.50px;top:458.45px;font-family:'Liberation Sans', sans-serif;font-size:10.7px;line-height:12.2px;color:#fff;-webkit-text-stroke:0.25px #fff">C REACTIVE<br>PROTEIN</div>
<div style="left:1172px;top:484px;width:68px;height:24.3px;background:#ff9900"></div>
<div class="t" style="left:1172.50px;top:490.95px;font-family:'Liberation Sans', sans-serif;font-size:10.7px;line-height:12.2px;color:#fff;-webkit-text-stroke:0.25px #fff">PR3</div>
<div style="left:1242px;top:484px;width:102.5px;height:24.3px;background:#ff9900"></div>
<div class="t" style="left:1242.50px;top:484.85px;font-family:'Liberation Sans', sans-serif;font-size:10.7px;line-height:12.2px;color:#fff;-webkit-text-stroke:0.25px #fff">Allergy Test Panal -<br>paediatric</div>
<div style="left:1172px;top:510.2px;width:68px;height:48.6px;background:#ff9900"></div>
<div class="t" style="left:1172.50px;top:529.30px;font-family:'Liberation Sans', sans-serif;font-size:10.7px;line-height:12.2px;color:#fff;-webkit-text-stroke:0.25px #fff">PR4</div>
<div style="left:1242px;top:510.2px;width:102.5px;height:48.6px;background:#ff9900"></div>
<div class="t" style="left:1242.50px;top:511.00px;font-family:'Liberation Sans', sans-serif;font-size:10.7px;line-height:12.2px;color:#fff;-webkit-text-stroke:0.25px #fff">COMPLETE BLOOD<br>COUNT<br>(AUTOMATED<br>COUNT)</div>
</body></html>
